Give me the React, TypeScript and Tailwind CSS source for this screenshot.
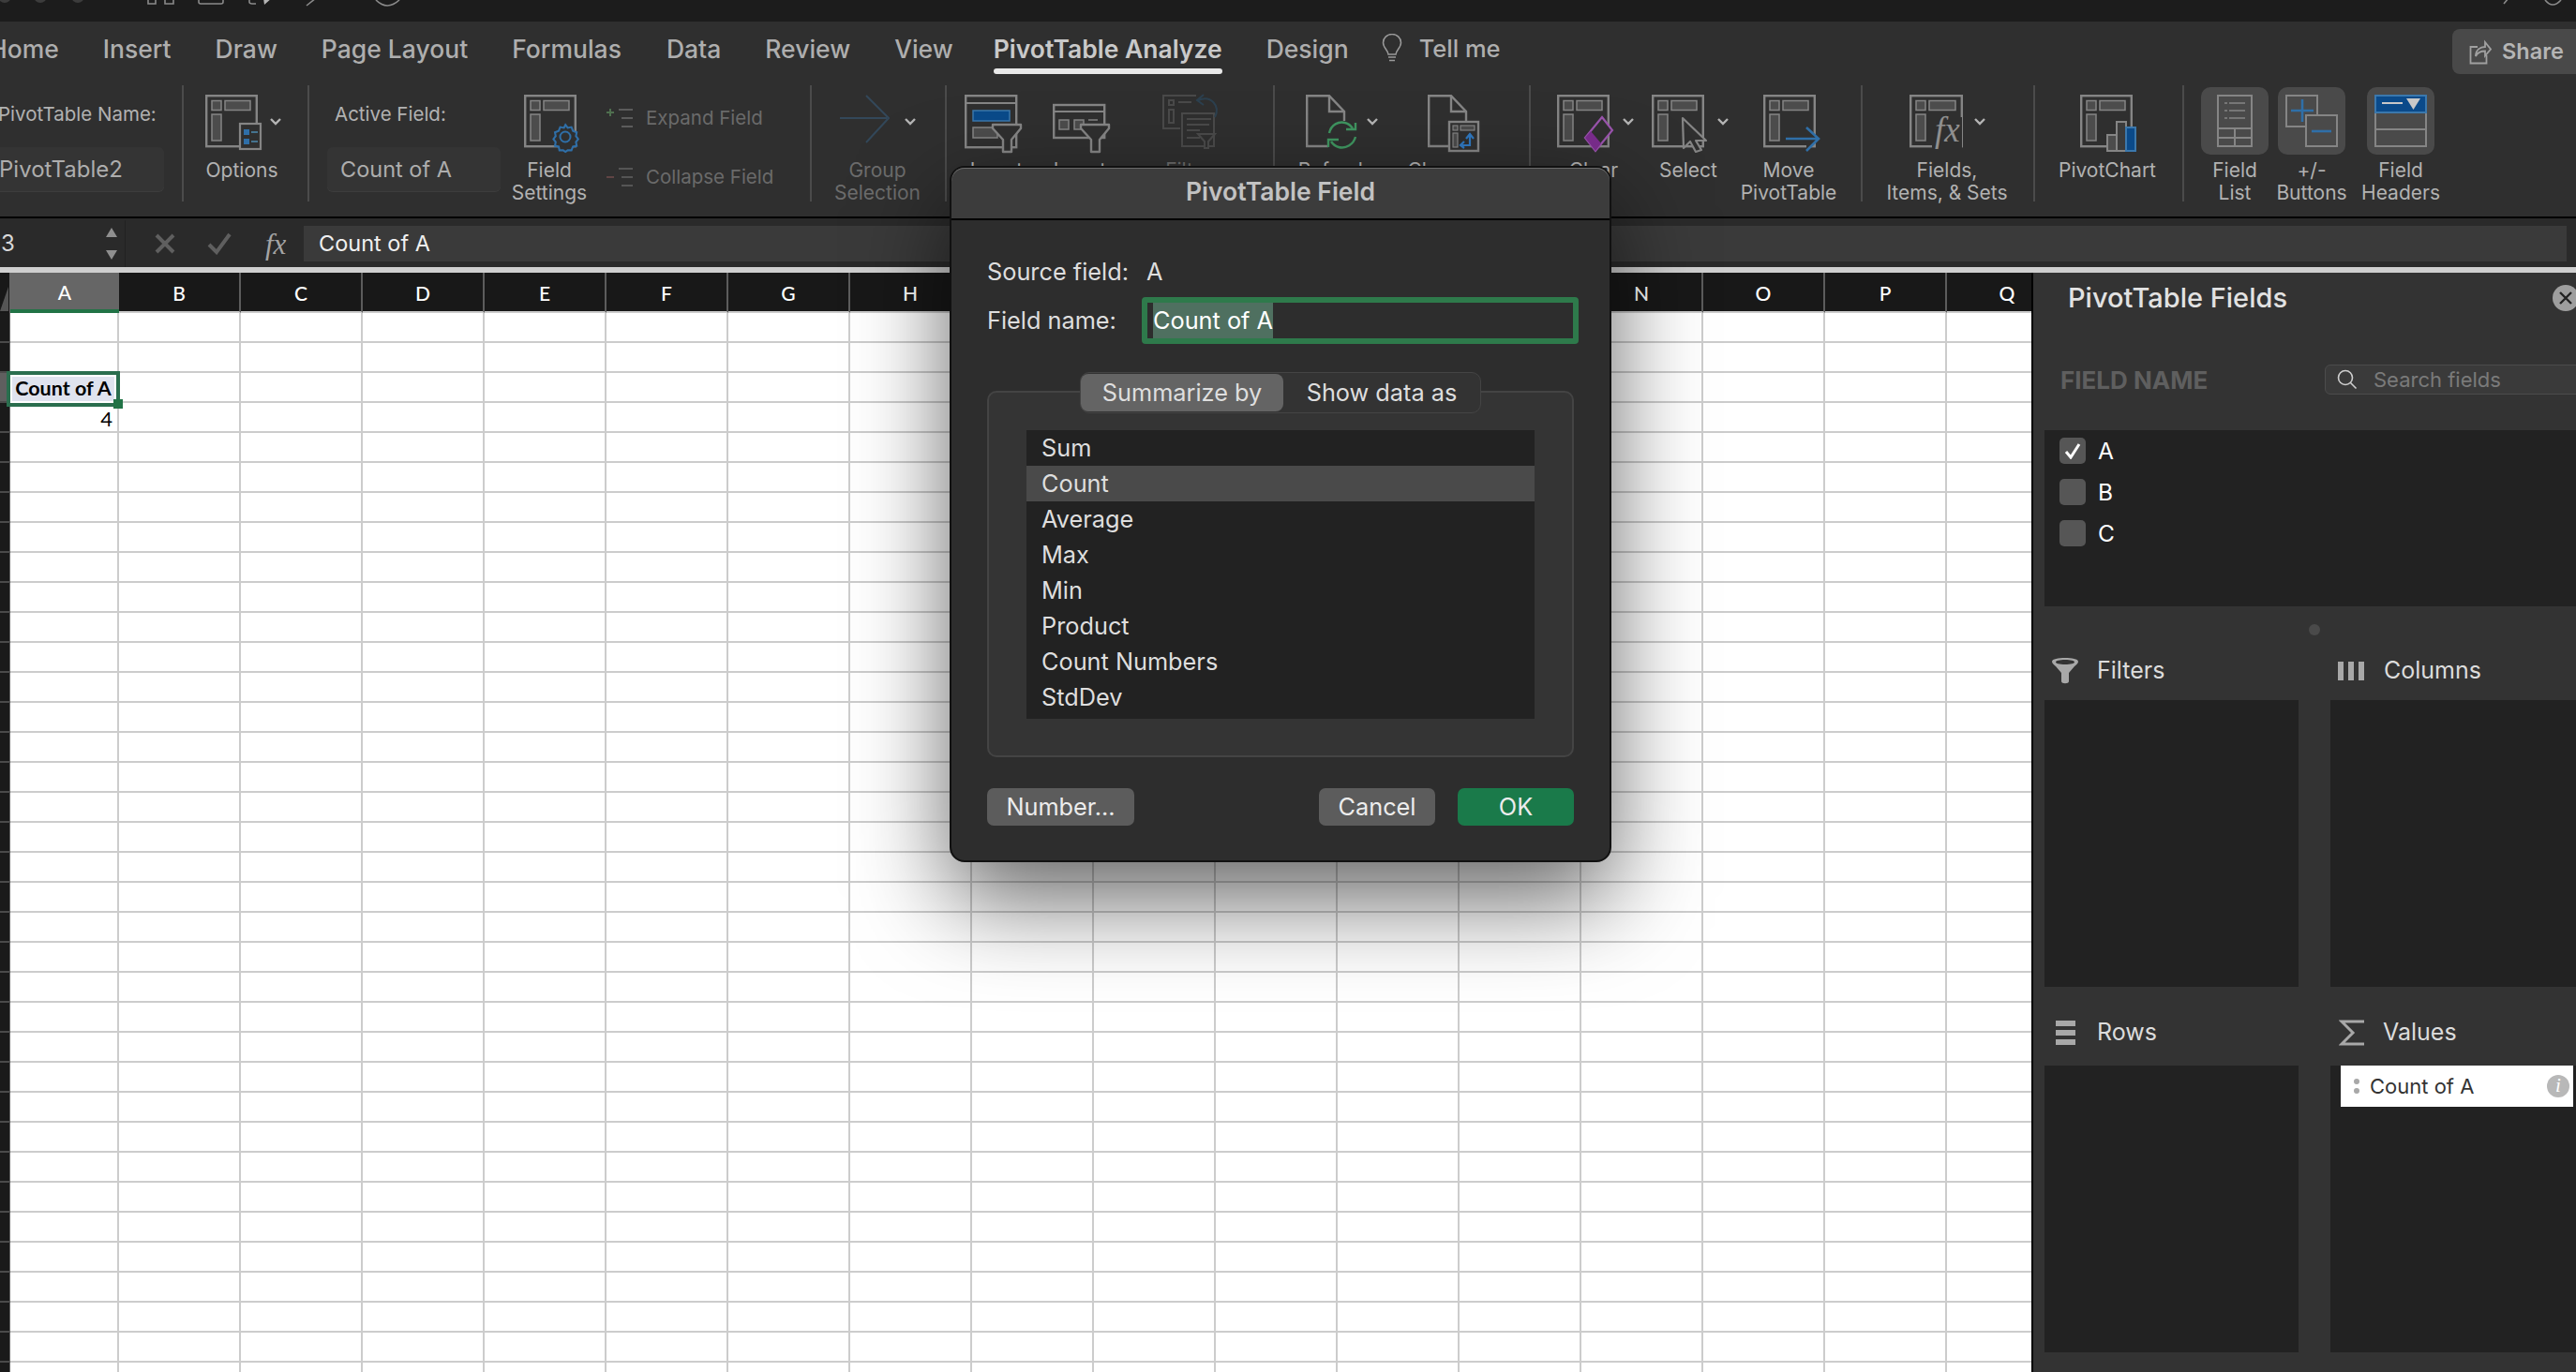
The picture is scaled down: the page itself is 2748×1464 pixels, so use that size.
import type { ReactNode } from "react";
import clsx from "clsx";

const COLS = ["B", "C", "D", "E", "F", "G", "H", "I", "J", "K", "L", "M", "N", "O", "P", "Q"];
const ROWS = Array.from({ length: 36 }, (_, i) => i);
const SUMMARIES = ["Sum", "Count", "Average", "Max", "Min", "Product", "Count Numbers", "StdDev"];

const LINE = "#858585";
const BLUE = "#2f6fa8";

function Chevron({ className }: { className?: string }) {
  return (
    <svg width="14" height="9" viewBox="0 0 14 9" className={clsx("shrink-0", className)}>
      <path d="M2 2l5 5 5-5" fill="none" stroke="#b4b4b4" strokeWidth="2.4" />
    </svg>
  );
}

// the little layout drawing most of the ribbon icons start from
function PivotBase({ w = 56 }: { w?: number }) {
  return (
    <>
      <rect x="1.2" y="1.2" width={w - 2.4} height="54" fill="none" stroke={LINE} strokeWidth="2.4" />
      <rect x="7" y="6.5" width="10" height="10" fill="#4c4c4c" stroke={LINE} strokeWidth="1.5" />
      <rect x="21" y="6.5" width={w - 29} height="10" fill="#4c4c4c" stroke={LINE} strokeWidth="1.5" />
      <rect x="7" y="21" width="10" height="28" fill="#4c4c4c" stroke={LINE} strokeWidth="1.5" />
    </>
  );
}

function Icon({ children, w = 64 }: { children: ReactNode; w?: number }) {
  return (
    <svg width={w} height="64" viewBox={`0 0 ${w} 64`} className="shrink-0 overflow-visible">
      {children}
    </svg>
  );
}

function Funnel({ x, y }: { x: number; y: number }) {
  return (
    <path
      d={`M${x} ${y}h30v4l-10 12v13h-9v-13l-11-12z`}
      fill="#2f2f2f"
      stroke={LINE}
      strokeWidth="2.4"
      strokeLinejoin="round"
    />
  );
}

function RibbonBtn({
  className,
  iconClass,
  label,
  dim,
  children,
}: {
  className: string;
  iconClass: string;
  label: ReactNode;
  dim?: boolean;
  children: ReactNode;
}) {
  return (
    <div className={clsx("flex shrink-0 flex-col items-center pt-[10px]", className)}>
      <div className={clsx("flex h-[69px] w-full shrink-0 items-start", iconClass)}>{children}</div>
      <div className={clsx("whitespace-nowrap text-center text-[21px] leading-[24px]", dim ? "text-[#6c6c6c]" : "text-[#b2b2b2]")}>
        {label}
      </div>
    </div>
  );
}

function ToggleBtn({ className, label, children }: { className: string; label: ReactNode; children: ReactNode }) {
  return (
    <div className={clsx("flex w-[72px] shrink-0 flex-col items-center pt-[2px]", className)}>
      <div className="flex h-[72px] w-full justify-center rounded-[10px] bg-[#4a4a4a] pt-[8px]">{children}</div>
      <div className="mt-[5px] whitespace-nowrap text-center text-[21px] leading-[24px] text-[#b2b2b2]">{label}</div>
    </div>
  );
}

function Tab({ children, active, className }: { children: ReactNode; active?: boolean; className?: string }) {
  return (
    <div className={clsx("flex flex-col", className)}>
      <span className={clsx("whitespace-nowrap text-[26.5px] leading-[30px]", active ? "font-semibold text-[#c9c9c9]" : "font-medium text-[#aeaeae]")}>
        {children}
      </span>
      {active && <span className="mt-[6px] h-[6px] rounded-full bg-[#e8e8e8]" />}
    </div>
  );
}

function TitleBar() {
  return (
    <div className="relative h-[23px] overflow-hidden bg-[#1c1c1c]">
      <svg width="450" height="23" viewBox="0 0 450 23" fill="none" stroke="#8a8a8a" strokeWidth="1.6">
        <circle cx="5" cy="-4" r="7" fill="#3c3c3c" stroke="none" />
        <circle cx="43" cy="-4" r="7" fill="#3c3c3c" stroke="none" />
        <circle cx="83" cy="-4" r="7" fill="#3c3c3c" stroke="none" />
        <path d="M158 -4v8h8v-8M176 -4v8h9v-8M212 -2v4q0 2 2 2h22q2 0 2-2v-4M266 -2v4q0 2 3 2h4" />
        <path d="M282 5l8-7h-9z" fill="#b5b5b5" stroke="none" />
        <path d="M327 6l10-8" />
        <path d="M401 0q12 12 25 0" />
      </svg>
      <span className="absolute left-[1327px] top-[-22px] text-[25px] font-semibold leading-[24px] text-[#bdbdbd]">Book2</span>
      <svg width="80" height="23" viewBox="0 0 80 23" fill="none" stroke="#8a8a8a" strokeWidth="1.6" className="absolute left-[2668px] top-0">
        <path d="M8 -2l-5 6" />
        <path d="M47 0q8 10 17 0" />
      </svg>
    </div>
  );
}

function Tabs() {
  return (
    <div className="flex h-[68px] items-start justify-between pt-[14px]">
      <div className="ml-[-12px] flex items-start gap-[47px]">
        <Tab>Home</Tab>
        <Tab>Insert</Tab>
        <Tab>Draw</Tab>
        <Tab>Page Layout</Tab>
        <Tab>Formulas</Tab>
        <Tab className="ml-[1px]">Data</Tab>
        <Tab>Review</Tab>
        <Tab>View</Tab>
        <Tab active className="ml-[-4px]">PivotTable Analyze</Tab>
        <Tab>Design</Tab>
        <div className="ml-[-12px] flex items-start gap-[18px]">
          <svg width="22" height="31" viewBox="0 0 22 31" fill="none" stroke="#9a9a9a" strokeWidth="1.5" className="mt-[-1px]">
            <path d="M7 22c0-4-5.500-7-5.500-12.500a9.500 9 0 0 1 19 0C20.500 15 15 18 15 22z" />
            <path d="M7 25h8M8 28.500h6" />
          </svg>
          <Tab className="[&>span]:text-[25.5px]">Tell me</Tab>
        </div>
      </div>
      <div className="mt-[-6px] flex h-[48px] w-[132px] items-center gap-[11px] rounded-l-[8px] bg-[#494949] pl-[18px]">
        <svg width="24" height="28" viewBox="0 0 24 28" fill="none" stroke="#a0a0a0" strokeWidth="1.8">
          <path d="M9 9H1.500v17.500h17V18" />
          <path d="M7 19c0-7 5-10 10-10V4l6 7.500-6 7v-5c-5 0-8 1.500-10 5.500z" />
        </svg>
        <span className="text-[23.500px] font-semibold text-[#b5b5b5]">Share</span>
      </div>
    </div>
  );
}

function RibbonGroups() {
  const groupClass = "flex h-[124px] shrink-0 border-r-2 border-[#4b4b4b]";
  return (
    <div className="flex items-start">
      <div className={clsx(groupClass, "w-[196px]")}>
        <div className="ml-[-8px] w-[183px] pt-[19px]">
          <div className="pl-[6px] text-[20.500px] leading-[24px] text-[#b2b2b2] whitespace-nowrap">PivotTable Name:</div>
          <div className="mt-[23px] flex h-[47px] items-center rounded-[6px] bg-[#343434] pl-[7px] text-[24px] text-[#adadad] shadow-[0_1px_0_#3d3d3d]">
            PivotTable2
          </div>
        </div>
      </div>

      <div className={clsx(groupClass, "w-[134px]")}>
        <RibbonBtn className="ml-[12px] w-[100px]" iconClass="pl-[11px]" label="Options">
          <Icon w={60}>
            <PivotBase />
            <rect x="37" y="31" width="22" height="27" fill="#2f2f2f" stroke={LINE} strokeWidth="2.2" />
            <rect x="41" y="37" width="6" height="6" fill={BLUE} />
            <rect x="41" y="47" width="6" height="6" fill={BLUE} />
            <path d="M49 40h7M49 50h7" stroke="#4d8bb0" strokeWidth="1.6" />
          </Icon>
          <Chevron className="ml-[8px] mt-[24px]" />
        </RibbonBtn>
      </div>

      <div className={clsx(groupClass, "w-[536px]")}>
        <div className="ml-[19px] w-[185px] shrink-0 pt-[19px]">
          <div className="pl-[8px] text-[20.500px] leading-[24px] text-[#b2b2b2]">Active Field:</div>
          <div className="mt-[23px] flex h-[47px] items-center rounded-[6px] bg-[#343434] pl-[14px] text-[23.500px] text-[#adadad] shadow-[0_1px_0_#3d3d3d]">
            Count of A
          </div>
        </div>
        <RibbonBtn
          className="ml-[7px] w-[90px]"
          iconClass="pl-[18px]"
          label={
            <>
              Field
              <br />
              Settings
            </>
          }
        >
          <Icon w={60}>
            <PivotBase />
            <path
              d="M44 29l3 4 5-1 2 5 5 2-1 5 3 4-3 4 1 5-5 1-2 5h-5l-3 2-3-2h-5l-1-5-5-1 1-5-3-4 3-4-1-5 5-2 2-5 5 1z"
              transform="translate(9 9) scale(.8)"
              fill="#2f2f2f"
              stroke={BLUE}
              strokeWidth="2.600"
            />
            <circle cx="44" cy="45" r="5.500" fill="none" stroke={BLUE} strokeWidth="2" />
          </Icon>
        </RibbonBtn>
        <div className="ml-[16px] flex flex-col gap-[33px] pt-[20px] text-[20.500px] leading-[30px] text-[#6a6a6a]">
          <div className="flex items-center gap-[13px]">
            <svg width="29" height="22" viewBox="0 0 29 22" stroke="#5c5c5c" strokeWidth="2">
              <path d="M0 5h8M4 1v8" stroke="#4f6f4f" />
              <path d="M13 2h15M16 11h12M16 20h12" />
            </svg>
            <span>Expand Field</span>
          </div>
          <div className="flex items-center gap-[13px]">
            <svg width="29" height="22" viewBox="0 0 29 22" stroke="#555" strokeWidth="2">
              <path d="M0 11h8" stroke="#604444" />
              <path d="M13 2h15M16 11h12M16 20h12" />
            </svg>
            <span>Collapse Field</span>
          </div>
        </div>
      </div>

      <div className={clsx(groupClass, "w-[144px]")}>
        <RibbonBtn
          dim
          className="ml-[10px] w-[120px]"
          iconClass="pl-[20px]"
          label={
            <>
              Group
              <br />
              Selection
            </>
          }
        >
          <Icon w={54}>
            <path d="M0 25h50M28 1l24 24-24 26" fill="none" stroke="#33485a" strokeWidth="2" />
          </Icon>
          <Chevron className="ml-[14px] mt-[24px]" />
        </RibbonBtn>
      </div>

      <div className={clsx(groupClass, "w-[350px]")}>
        <RibbonBtn
          className="ml-[18px] w-[70px]"
          iconClass="pl-[1px]"
          label={
            <>
              Insert
              <br />
              Slicer
            </>
          }
        >
          <Icon w={60}>
            <rect x="1.200" y="1.200" width="54" height="55" fill="none" stroke={LINE} strokeWidth="2.400" />
            <path d="M1 9h54" stroke={LINE} strokeWidth="2" />
            <rect x="9" y="17" width="39" height="11" fill="#0a4a8a" stroke="#3b78ad" strokeWidth="1.500" />
            <rect x="9" y="35" width="26" height="11" fill="#4c4c4c" stroke={LINE} strokeWidth="1.500" />
            <Funnel x={30} y={32} />
          </Icon>
        </RibbonBtn>
        <RibbonBtn
          className="ml-[19px] w-[70px]"
          iconClass="pl-[6px]"
          label={
            <>
              Insert
              <br />
              Timeline
            </>
          }
        >
          <Icon w={60}>
            <rect x="1.200" y="11" width="54" height="35" fill="none" stroke={LINE} strokeWidth="2.400" />
            <path d="M1 18h54" stroke={LINE} strokeWidth="2" />
            <rect x="7" y="27" width="10" height="10" fill="#4c4c4c" stroke={LINE} strokeWidth="1.500" />
            <rect x="23" y="27" width="10" height="10" fill="#4c4c4c" stroke={LINE} strokeWidth="1.500" />
            <path d="M38 27h10" stroke={LINE} strokeWidth="1.500" />
            <Funnel x={30} y={32} />
          </Icon>
        </RibbonBtn>
        <RibbonBtn
          dim
          className="ml-[46px] w-[70px]"
          iconClass="pl-[7px] opacity-50"
          label={
            <>
              Filter
              <br />
              Connections
            </>
          }
        >
          <Icon w={60}>
            <g fill="none" stroke="#666" strokeWidth="2">
              <path d="M36 1H1v35h18" />
              <rect x="7" y="6" width="5" height="5" />
              <path d="M17 8h14M7 16v14h5V16z" />
              <rect x="21" y="20" width="34" height="35" fill="#2f2f2f" />
              <path d="M26 26h26M26 32h24M26 38h14M26 46h14" />
              <path d="M38 42h18l-7 8v7h-4v-7z" fill="#2f2f2f" />
            </g>
            <path d="M38 6c14-6 24 6 18 18M44 0l-7 6 7 5" fill="none" stroke="#2b5270" strokeWidth="2" />
          </Icon>
        </RibbonBtn>
      </div>

      <div className={clsx(groupClass, "w-[273px]")}>
        <RibbonBtn className="ml-[18px] w-[90px]" iconClass="pl-[15px]" label="Refresh">
          <Icon w={56}>
            <path d="M24 55H1.200V1.200H25L41 18v10" fill="none" stroke={LINE} strokeWidth="2.400" />
            <path d="M25 1v17h16" fill="none" stroke={LINE} strokeWidth="2.400" />
            <path d="M25 41c2-9 10-13 17-11 4 1 6 3 8 6M53 45c-2 8-10 13-18 11-4-1-6-3-8-6" fill="none" stroke="#3f9560" strokeWidth="2.400" />
            <path d="M43 37h10v-7M35 48H24v8" fill="none" stroke="#3f9560" strokeWidth="2.400" />
          </Icon>
          <Chevron className="ml-[8px] mt-[24px]" />
        </RibbonBtn>
        <RibbonBtn
          className="ml-[32px] w-[80px]"
          iconClass="pl-[23px]"
          label={
            <>
              Change
              <br />
              Source
            </>
          }
        >
          <Icon w={56}>
            <path d="M22 55H1.200V1.200H25L41 18v10" fill="none" stroke={LINE} strokeWidth="2.400" />
            <path d="M25 1v17h16" fill="none" stroke={LINE} strokeWidth="2.400" />
            <rect x="23" y="29" width="31" height="31" fill="#2f2f2f" stroke={LINE} strokeWidth="2.400" />
            <rect x="27" y="33" width="5" height="5" fill="#4c4c4c" stroke={LINE} strokeWidth="1.200" />
            <rect x="35" y="33" width="15" height="5" fill="#4c4c4c" stroke={LINE} strokeWidth="1.200" />
            <rect x="27" y="41" width="5" height="15" fill="#4c4c4c" stroke={LINE} strokeWidth="1.200" />
            <path d="M36 54h9V43M41 47l4-5 4 5M39 50l-4 4 4 3" fill="none" stroke="#2f78c0" strokeWidth="2.200" />
          </Icon>
        </RibbonBtn>
      </div>

      <div className={clsx(groupClass, "w-[354px]")}>
        <RibbonBtn className="ml-[27px] w-[80px]" iconClass="pl-[1px]" label="Clear">
          <Icon w={60}>
            <PivotBase />
            <path d="M48 24l11 14-18 22-11-14z" fill="#2f2f2f" stroke="#9a54ad" strokeWidth="2.200" />
            <path d="M36 39l11 13-6 8-11-14z" fill="#7b2d8e" />
          </Icon>
          <Chevron className="ml-[9px] mt-[24px]" />
        </RibbonBtn>
        <RibbonBtn className="ml-[21px] w-[80px]" iconClass="pl-[1px]" label="Select">
          <Icon w={60}>
            <PivotBase />
            <path d="M33 25l25 24H47l6 10-6 2-6-11-7 7z" fill="#2f2f2f" stroke={LINE} strokeWidth="2.200" strokeLinejoin="round" />
          </Icon>
          <Chevron className="ml-[9px] mt-[24px]" />
        </RibbonBtn>
        <RibbonBtn
          className="ml-[17px] w-[100px]"
          iconClass="pl-[23px]"
          label={
            <>
              Move
              <br />
              PivotTable
            </>
          }
        >
          <Icon w={60}>
            <PivotBase />
            <path d="M24 47h34M46 35l13 12-13 13" fill="#2f2f2f" stroke={BLUE} strokeWidth="2.600" />
          </Icon>
        </RibbonBtn>
      </div>

      <div className={clsx(groupClass, "w-[184px]")}>
        <RibbonBtn
          className="ml-[10px] w-[160px]"
          iconClass="pl-[40px]"
          label={
            <>
              Fields,
              <br />
              Items, &amp; Sets
            </>
          }
        >
          <Icon w={58}>
            <PivotBase w={57} />
            <rect x="24" y="24" width="32" height="36" fill="#2f2f2f" />
            <text x="27" y="50" fontFamily="'Liberation Serif', serif" fontStyle="italic" fontSize="37" fill="#8f8f8f">
              fx
            </text>
          </Icon>
          <Chevron className="ml-[10px] mt-[24px]" />
        </RibbonBtn>
      </div>

      <div className={clsx(groupClass, "w-[159px]")}>
        <RibbonBtn className="ml-[17px] w-[120px]" iconClass="pl-[31px]" label="PivotChart">
          <Icon w={62}>
            <PivotBase w={56} />
            <rect x="29" y="43" width="10" height="17" fill="#4c4c4c" stroke={LINE} strokeWidth="2" />
            <rect x="39" y="29" width="10" height="31" fill="#3b3b3b" stroke={LINE} strokeWidth="2" />
            <rect x="49" y="35" width="10" height="25" fill="#0a4a8a" stroke="#3b78ad" strokeWidth="2" />
          </Icon>
        </RibbonBtn>
      </div>

      <ToggleBtn
        className="ml-[18px]"
        label={
          <>
            Field
            <br />
            List
          </>
        }
      >
        <svg width="38" height="56" viewBox="0 0 38 56" fill="none" stroke={LINE} strokeWidth="2">
          <rect x="1" y="1" width="36" height="54" />
          <path d="M8 9h22M8 17h22M8 25h22" strokeDasharray="3 2 17" strokeWidth="1.400" />
          <path d="M1 36h36M1 46h36M19 36v19" />
        </svg>
      </ToggleBtn>
      <ToggleBtn
        className="ml-[10px]"
        label={
          <>
            +/-
            <br />
            Buttons
          </>
        }
      >
        <svg width="56" height="56" viewBox="0 0 56 56" fill="none">
          <rect x="1" y="1" width="33" height="33" stroke={LINE} strokeWidth="2" />
          <path d="M6 17h24M18 5v24" stroke={BLUE} strokeWidth="2.600" />
          <rect x="22" y="22" width="33" height="33" fill="#4a4a4a" stroke={LINE} strokeWidth="2" />
          <path d="M28 39h21" stroke={BLUE} strokeWidth="2.600" />
        </svg>
      </ToggleBtn>
      <ToggleBtn
        className="ml-[23px]"
        label={
          <>
            Field
            <br />
            Headers
          </>
        }
      >
        <svg width="56" height="56" viewBox="0 0 56 56" fill="none">
          <rect x="1" y="1" width="54" height="54" stroke={LINE} strokeWidth="2" />
          <rect x="1" y="1" width="54" height="18" fill="#0a4a8a" stroke="#3b78ad" strokeWidth="2" />
          <path d="M8 9h22" stroke="#c8c8c8" strokeWidth="2" />
          <path d="M34 4h15l-7.500 12z" fill="#c8c8c8" />
          <path d="M1 37h54" stroke={LINE} strokeWidth="2" />
        </svg>
      </ToggleBtn>
    </div>
  );
}

function FormulaBar() {
  return (
    <div className="flex h-[54px] shrink-0 border-t-2 border-black bg-[#2a2a2a] pt-[2px]">
      <div className="flex w-[134px] shrink-0 items-center justify-between border-r border-[#222] pr-[7px] text-[24px] text-[#d8d8d8]">
        <span className="ml-[1px]">3</span>
        <svg width="14" height="38" viewBox="0 0 14 38" fill="#8f8f8f">
          <path d="M7 2l6 10H1zM7 36L1 26h12z" />
        </svg>
      </div>
      <div className="flex flex-1 items-center pr-[10px]">
        <svg width="24" height="24" viewBox="0 0 24 24" className="ml-[30px]" stroke="#5f5f5f" strokeWidth="4" fill="none">
          <path d="M3 3l18 18M21 3L3 21" />
        </svg>
        <svg width="28" height="24" viewBox="0 0 28 24" className="ml-[33px]" stroke="#5f5f5f" strokeWidth="4" fill="none">
          <path d="M2 13l8 8L24 2" />
        </svg>
        <span className="ml-[34px] w-[30px] font-['Liberation_Serif'] text-[31px] italic leading-none text-[#a4a4a4]">fx</span>
        <div className="ml-[11px] flex h-[38px] flex-1 items-center bg-[#3a3a3a] pl-[16px] text-[23.500px] text-[#f0f0f0]">Count of A</div>
      </div>
    </div>
  );
}

function Sheet() {
  return (
    <div className="w-[2167px] shrink-0 overflow-hidden bg-white font-['Lato']">
      <div className="flex h-[43px] w-[2400px] bg-[#181818] text-[21px] font-medium text-white">
        <div className="flex w-[11px] shrink-0 items-end border-r border-[#666]">
          <svg width="9" height="30" viewBox="0 0 9 30">
            <path d="M9 2v26H0z" fill="#555" />
          </svg>
        </div>
        <div className="flex w-[116px] shrink-0 items-center justify-center border-b-4 border-[#217346] bg-[#666] pt-[3px]">A</div>
        {COLS.map((c) => (
          <div key={c} className="flex w-[130px] shrink-0 items-center justify-center border-b-2 border-r-2 border-b-[#cccccc] border-r-[#5c5c5c] pt-[3px]">
            {c}
          </div>
        ))}
      </div>
      {ROWS.map((r) => (
        <div key={r} className="flex h-[32px] w-[2400px]">
          <div className={clsx("w-[11px] shrink-0 border-b-2 border-r border-b-[#4a4a4a] border-r-[#666]", r === 2 ? "bg-[#5f5f5f]" : "bg-[#1a1a1a]")} />
          <div className="relative flex w-[116px] shrink-0 items-center justify-end border-b-2 border-r-2 border-[#cccccc] pr-[5px] pt-[2px] text-[22px] text-black">
            {r === 3 && "4"}
            {r === 2 && (
              <div className="absolute left-[-4px] top-[-2px] z-10 h-[38px] w-[121px] border-4 border-[#2a6e4e] bg-white p-[2px]">
                <div className="flex h-full items-center justify-center whitespace-nowrap bg-[#dfe3ee] text-[21.500px] font-bold leading-none">Count of A</div>
                <div className="absolute bottom-[-6px] right-[-7px] h-[10px] w-[10px] bg-[#217346]" />
              </div>
            )}
          </div>
          {COLS.map((c) => (
            <div key={c} className="w-[130px] shrink-0 border-b-2 border-r-2 border-[#cccccc]" />
          ))}
        </div>
      ))}
    </div>
  );
}

function AreaHead({ icon, label, className }: { icon: ReactNode; label: string; className: string }) {
  return (
    <div className={clsx("flex h-[38px] items-center", className)}>
      {icon}
      <span className="text-[25px] text-[#dcdcdc]">{label}</span>
    </div>
  );
}

function FieldsPanel() {
  return (
    <div className="w-[590px] shrink-0 border-l-2 border-black bg-[#333333]">
      <div className="flex h-[54px] items-center justify-between pl-[37px] pr-[6px]">
        <span className="text-[29px] font-medium text-[#e2e2e2]">PivotTable Fields</span>
        <span className="flex h-[28px] w-[28px] items-center justify-center rounded-full bg-[#9e9e9e]">
          <svg width="16" height="16" viewBox="0 0 16 16" stroke="#222" strokeWidth="2.400">
            <path d="M2 2l12 12M14 2L2 14" />
          </svg>
        </span>
      </div>
      <div className="mt-[44px] flex h-[32px] items-center pl-[29px]">
        <span className="w-[282px] shrink-0 text-[26px] font-bold text-[#5f5f5f]">FIELD NAME</span>
        <div className="flex h-[32px] w-[320px] shrink-0 items-center rounded-[6px] border border-[#4c4c4c] bg-[#3a3a3a] pl-[12px]">
          <svg width="22" height="22" viewBox="0 0 22 22" fill="none" stroke="#cfcfcf" strokeWidth="1.600">
            <circle cx="9" cy="9" r="7.500" />
            <path d="M14.500 14.500l6 6" />
          </svg>
          <span className="ml-[17px] text-[22px] text-[#7a7a7a]">Search fields</span>
        </div>
      </div>
      <div className="ml-[12px] mt-[38px] flex h-[188px] flex-col gap-[16px] bg-[#222222] pl-[16px] pt-[8px]">
        {["A", "B", "C"].map((f) => (
          <div key={f} className="flex h-[28px] items-center gap-[13px] text-[24.500px] text-white">
            <span className="flex h-[28px] w-[28px] items-center justify-center rounded-[5px] bg-[#565656]">
              {f === "A" && (
                <svg width="18" height="18" viewBox="0 0 18 18" fill="none" stroke="#fff" strokeWidth="3">
                  <path d="M2 10l5 6 9-14" />
                </svg>
              )}
            </span>
            {f}
          </div>
        ))}
      </div>
      <div className="ml-[294px] mt-[19px] h-[12px] w-[12px] rounded-full bg-[#4a4a4a]" />
      <div className="ml-[12px] mt-[19px] grid grid-cols-[271px_300px] gap-x-[34px]">
        <AreaHead
          className="mb-[12px]"
          label="Filters"
          icon={
            <svg width="30" height="28" viewBox="0 0 30 28" className="ml-[7px] mr-[19px]" fill="#a8a8a8">
              <path fillRule="evenodd" d="M1 4c0-3 7-4 14-4s14 1 14 4c0 2-2 3-4 5l-6 7v9c0 3-8 3-8 0v-9L5 9C3 7 1 6 1 4zm14-2C9 2 5 3 5 4.500S9 7 15 7s10-1 10-2.500S21 2 15 2z" />
            </svg>
          }
        />
        <AreaHead
          className="mb-[12px]"
          label="Columns"
          icon={
            <svg width="28" height="20" viewBox="0 0 28 20" className="ml-[8px] mr-[21px]" fill="#a8a8a8">
              <path d="M0 0h6v20H0zM11 0h6v20h-6zM22 0h6v20h-6z" />
            </svg>
          }
        />
        <div className="h-[306px] bg-[#222222]" />
        <div className="h-[306px] bg-[#222222]" />
        <AreaHead
          className="mb-[16px] mt-[30px]"
          label="Rows"
          icon={
            <svg width="21" height="26" viewBox="0 0 21 26" className="ml-[12px] mr-[23px]" fill="#a8a8a8">
              <path d="M0 0h21v6H0zM0 10h21v6H0zM0 20h21v6H0z" />
            </svg>
          }
        />
        <AreaHead
          className="mb-[16px] mt-[30px]"
          label="Values"
          icon={
            <svg width="27" height="28" viewBox="0 0 27 28" className="ml-[9px] mr-[20px]" fill="none" stroke="#a8a8a8" strokeWidth="3">
              <path d="M27 2H3l12 12L3 26h24" />
            </svg>
          }
        />
        <div className="h-[306px] bg-[#222222]" />
        <div className="h-[306px] bg-[#222222] pl-[11px]">
          <div className="flex h-[44px] w-[248px] items-center bg-white pl-[14px]">
            <span className="flex w-[17px] flex-col gap-[4px]">
              <span className="h-[6px] w-[6px] rounded-full bg-[#a8a8a8]" />
              <span className="h-[6px] w-[6px] rounded-full bg-[#a8a8a8]" />
            </span>
            <span className="w-[189px] text-[22px] text-[#333]">Count of A</span>
            <span className="flex h-[24px] w-[24px] items-center justify-center rounded-full bg-[#b8b8b8] font-['Liberation_Serif'] text-[21px] italic text-white">
              i
            </span>
          </div>
        </div>
      </div>
    </div>
  );
}

function PivotFieldDialog() {
  return (
    <div className="absolute left-[1013px] top-[177px] z-20 h-[743px] w-[706px] rounded-[16px] border-2 border-[#111] bg-[#2d2d2d] text-[25.300px] text-[#dedede] shadow-[0_40px_100px_rgba(0,0,0,0.6)]">
      <div className="flex h-[56px] items-center justify-center rounded-t-[14px] border-b-2 border-black bg-[#3c3c3c] pb-[3px] text-[26.500px] font-semibold text-[#c2c2c2] shadow-[inset_0_1px_0_#6a6a6a]">
        PivotTable Field
      </div>
      <div className="px-[38px]">
        <div className="mt-[40px] flex h-[30px] items-center">
          <span className="w-[170px]">Source field:</span>
          <span>A</span>
        </div>
        <div className="mt-[12px] flex h-[50px] items-center">
          <span className="w-[165px] shrink-0">Field name:</span>
          <div className="flex h-[50px] w-[466px] shrink-0 items-center rounded-[4px] border-[6px] border-[#2e7a4b] pl-[6px]">
            <span className="bg-[#4f7060] text-white">Count of A</span>
          </div>
        </div>
        <div className="relative z-10 mt-[30px] flex justify-center">
          <div className="flex h-[44px] w-[428px] items-center rounded-[10px] border border-[#444] bg-[#333]">
            <span className="flex h-[40px] w-[216px] items-center justify-center rounded-[8px] bg-[#646464]">Summarize by</span>
            <span className="flex-1 text-center">Show data as</span>
          </div>
        </div>
        <div className="mt-[-24px] h-[391px] rounded-[10px] border-2 border-[#444] bg-[#343434] px-[40px] pt-[40px]">
          <div className="h-[308px] bg-[#222222]">
            {SUMMARIES.map((s) => (
              <div key={s} className={clsx("flex h-[38px] items-center pl-[16px]", s === "Count" && "bg-[#4a4a4a]")}>
                {s}
              </div>
            ))}
          </div>
        </div>
        <div className="mt-[33px] flex text-[#ececec]">
          <span className="flex h-[40px] w-[157px] items-center justify-center rounded-[7px] bg-[#5c5c5c]">Number...</span>
          <span className="ml-auto flex h-[40px] w-[124px] items-center justify-center rounded-[7px] bg-[#5c5c5c]">Cancel</span>
          <span className="ml-[24px] flex h-[40px] w-[124px] items-center justify-center rounded-[7px] bg-[#1a7a4a]">OK</span>
        </div>
      </div>
    </div>
  );
}

export default function App() {
  return (
    <div className="relative flex h-[1464px] w-[2748px] flex-col overflow-hidden bg-black font-['Inter',sans-serif]">
      <TitleBar />
      <div className="h-[208px] shrink-0 bg-[#2f2f2f]">
        <Tabs />
        <RibbonGroups />
      </div>
      <FormulaBar />
      <div className="h-[6px] shrink-0 bg-[#cfcfcf]" />
      <div className="flex min-h-0 flex-1">
        <Sheet />
        <FieldsPanel />
      </div>
      <PivotFieldDialog />
    </div>
  );
}
